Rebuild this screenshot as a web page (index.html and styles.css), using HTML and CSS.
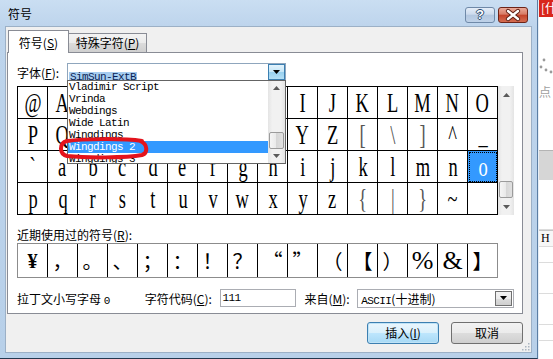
FILE: index.html
```html
<!DOCTYPE html>
<html>
<head lang="zh-CN">
    <meta charset="UTF-8">
    <title>符号</title>
    <link rel="stylesheet" href="styles.css">
</head>
<body>

<div class="dialog">
    <header class="titlebar">
        <span class="title">符号</span>
        <div class="caption-buttons">
            <div class="cap help">?</div>
            <div class="cap close">
                <svg width="28" height="14" viewBox="0 0 28 14">
                    <path d="M9 3l10 8M19 3L9 11" stroke="#5b1d12" stroke-width="4.2" stroke-linecap="round"/>
                    <path d="M9 3l10 8M19 3L9 11" stroke="#fff" stroke-width="2.4" stroke-linecap="round"/>
                </svg>
            </div>
        </div>
    </header>

    <main class="client">
        <nav class="tabs">
            <div class="tab active">符号(<u>S</u>)</div>
            <div class="tab">特殊字符(<u>P</u>)</div>
        </nav>

        <section class="panel">
            <div class="row font-row">
                <label class="lbl-font">字体(<u>F</u>):</label>
                <div class="combo">
                    <div class="combo-field">
                        <div class="combo-text"><span class="sel">SimSun-ExtB</span></div>
                        <div class="drop-btn hot">
                            <svg width="7" height="4"><path d="M0 0h7L3.5 4z" fill="#000"/></svg>
                        </div>
                    </div>
                    <!-- open font list -->
                    <div class="droplist">
                        <div class="items">
                            <div class="item">Vladimir Script</div>
                            <div class="item">Vrinda</div>
                            <div class="item">Webdings</div>
                            <div class="item">Wide Latin</div>
                            <div class="item">Wingdings</div>
                            <div class="item picked">Wingdings 2</div>
                            <div class="item">Wingdings 3</div>
                        </div>
                        <div class="vscroll small">
                            <div class="arrow"><svg width="7" height="4"><path d="M0 4h7L3.5 0z" fill="#5a5a5a"/></svg></div>
                            <div class="track"><div class="thumb"></div></div>
                            <div class="arrow"><svg width="7" height="4"><path d="M0 0h7L3.5 4z" fill="#5a5a5a"/></svg></div>
                        </div>
                    </div>
                    <svg class="mark" width="92" height="24" viewBox="0 0 92 24">
                        <path d="M84 5C64 2 24 3 9 5C1 7 1 18 9 20C28 22 68 22 84 19C90 17 90 8 82 5" fill="none" stroke="#e3131c" stroke-width="4" stroke-linecap="round"/>
                    </svg>
                </div>
            </div>

            <div class="charbox">
                <div class="charmap">
                    <div><span>@</span></div><div><span>A</span></div><div><span>B</span></div><div><span>C</span></div><div><span>D</span></div><div><span>E</span></div><div><span>F</span></div><div><span>G</span></div><div><span>H</span></div><div><span>I</span></div><div><span>J</span></div><div><span>K</span></div><div><span>L</span></div><div><span>M</span></div><div><span>N</span></div><div><span>O</span></div>
                    <div><span>P</span></div><div><span>Q</span></div><div><span>R</span></div><div><span>S</span></div><div><span>T</span></div><div><span>U</span></div><div><span>V</span></div><div><span>W</span></div><div><span>X</span></div><div><span>Y</span></div><div><span>Z</span></div><div class="light"><span>[</span></div><div class="light"><span>\</span></div><div class="light"><span>]</span></div><div><span>^</span></div><div><span>_</span></div>
                    <div><span>`</span></div><div><span>a</span></div><div><span>b</span></div><div><span>c</span></div><div><span>d</span></div><div><span>e</span></div><div><span>f</span></div><div><span>g</span></div><div><span>h</span></div><div><span>i</span></div><div><span>j</span></div><div><span>k</span></div><div><span>l</span></div><div><span>m</span></div><div><span>n</span></div><div class="current"><span>o</span></div>
                    <div><span>p</span></div><div><span>q</span></div><div><span>r</span></div><div><span>s</span></div><div><span>t</span></div><div><span>u</span></div><div><span>v</span></div><div><span>w</span></div><div><span>x</span></div><div><span>y</span></div><div><span>z</span></div><div class="light"><span>{</span></div><div class="light"><span>|</span></div><div class="light"><span>}</span></div><div><span>~</span></div><div></div>
                </div>
                <div class="vscroll">
                    <div class="arrow"><svg width="7" height="4"><path d="M0 4h7L3.5 0z" fill="#5a5a5a"/></svg></div>
                    <div class="track"><div class="thumb"></div></div>
                    <div class="arrow"><svg width="7" height="4"><path d="M0 0h7L3.5 4z" fill="#5a5a5a"/></svg></div>
                </div>
            </div>

            <div class="recent-label">近期使用过的符号(<u>R</u>):</div>
            <div class="recent">
                <span class="latin bold">¥</span><span>，</span><span>。</span><span>、</span><span>；</span><span>：</span><span>！</span><span>？</span>
                <span>“</span><span>”</span><span>（</span><span>【</span><span>）</span><span class="latin">%</span><span class="latin">&amp;</span><span>】</span>
            </div>

            <div class="row bottom-row">
                <span class="lbl-kind">拉丁文小写字母 <span class="mono">0</span></span>
                <label class="lbl-code">字符代码(<u>C</u>):</label>
                <div class="code-input">111</div>
                <label class="lbl-from">来自(<u>M</u>):</label>
                <div class="select">
                    <div class="select-text"><span class="mono">ASCII</span>(十进制)</div>
                    <div class="select-btn">
                        <svg width="7" height="4"><path d="M0 0h7L3.5 4z" fill="#000"/></svg>
                    </div>
                </div>
            </div>
        </section>

        <footer class="buttons">
            <button class="btn default">插入(<u>I</u>)</button>
            <button class="btn">取消</button>
        </footer>

        <svg class="grip" width="9" height="9" viewBox="0 0 9 9">
            <rect x="7" y="1" width="1.5" height="1.5" fill="#a9b4c0"/>
            <rect x="4" y="4" width="1.5" height="1.5" fill="#a9b4c0"/>
            <rect x="7" y="4" width="1.5" height="1.5" fill="#a9b4c0"/>
            <rect x="1" y="7" width="1.5" height="1.5" fill="#a9b4c0"/>
            <rect x="4" y="7" width="1.5" height="1.5" fill="#a9b4c0"/>
            <rect x="7" y="7" width="1.5" height="1.5" fill="#a9b4c0"/>
        </svg>
    </main>
</div>

<!-- window behind the dialog -->
<aside class="bgapp">
    <div class="bg-ribbon">[什</div>
    <div class="bg-canvas">
        <svg class="bg-dots" width="14" height="20">
            <circle cx="5" cy="3" r="1.4" fill="#9a9a9a"/>
            <circle cx="2" cy="10" r="1.4" fill="#9a9a9a"/>
            <circle cx="7" cy="13" r="1.4" fill="#9a9a9a"/>
            <circle cx="12" cy="15" r="1.4" fill="#9a9a9a"/>
        </svg>
        <div class="bg-note">点</div>
    </div>
    <div class="bg-band"></div>
    <div class="bg-rows">
        <div class="bg-row blank"></div>
        <div class="bg-row head">H</div>
        <div class="bg-row"></div>
        <div class="bg-row tall"></div>
        <div class="bg-row tall"></div>
        <div class="bg-row"></div>
    </div>
</aside>

</body>
</html>
```

FILE: styles.css
```css
* {
    box-sizing: border-box;
}
body {
    margin: 0;
    width: 553px;
    height: 359px;
    overflow: hidden;
    display: flex;
    font-family: "Noto Sans CJK SC", sans-serif;
    font-size: 12px;
    color: #000;
    background: #fff;
}
u {
    text-underline-offset: 1px;
}
.mono {
    font-family: "Liberation Mono", "Courier New", "Nimbus Mono PS", "FreeMono", "DejaVu Sans Mono", monospace;
    font-size: 11px;
    letter-spacing: -0.6px;
}

/* window frame */
.dialog {
    width: 538px;
    height: 359px;
    flex-shrink: 0;
    display: flex;
    flex-direction: column;
    padding: 0 6px 6px;
    background: linear-gradient(#cadef2, #bdd4ec 27px, #b8d0e9);
    border-right: 1px solid #5b7ea4;
    border-bottom: 1px solid #23384f;
}
.titlebar {
    height: 27px;
    display: flex;
    align-items: flex-start;
    padding: 6px 3px 0 2px;
}
.title {
    line-height: 16px;
}
.caption-buttons {
    margin-left: auto;
    margin-top: 1px;
    display: flex;
    gap: 3px;
}
.cap {
    width: 30px;
    height: 16px;
    border-radius: 3px;
    display: flex;
    align-items: center;
    justify-content: center;
}
.help {
    border: 1px solid #6f89a8;
    background: linear-gradient(#e4edf8, #cddbed 45%, #b3c7e0 50%, #bfd2e8);
    color: #fff;
    font: bold 13px/14px "Liberation Sans", sans-serif;
    text-shadow: 1px 0 0 #2d4b70, -1px 0 0 #2d4b70, 0 1px 0 #2d4b70, 0 -1px 0 #2d4b70;
}
.close {
    border: 1px solid #6d2418;
    background: linear-gradient(#eba998, #d77c66 45%, #c4432a 50%, #d46d52);
}

.client {
    flex: 1;
    position: relative;
    display: flex;
    flex-direction: column;
    padding: 3px 8px 8px 1px;
    background: #f0f0f0;
    box-shadow: 0 0 0 1px #9cb0c6;
}

/* tabs */
.tabs {
    position: relative;
    z-index: 1;
    display: flex;
    align-items: flex-end;
    height: 23px;
    margin-bottom: -1px;
    padding-left: 1px;
}
.tab {
    width: 79px;
    height: 19px;
    margin-bottom: 1px;
    padding-top: 1px;
    text-align: center;
    line-height: 16px;
    border: 1px solid #898c95;
    border-bottom: none;
    background: linear-gradient(#f3f3f3, #ebebeb 50%, #dcdcdc 50%, #cfcfcf);
}
.tab.active {
    width: 61px;
    height: 23px;
    margin-bottom: 0;
    padding-top: 4px;
    background: #fff;
}
.tab + .tab {
    margin-left: -1px;
}

.panel {
    border: 1px solid #898c95;
    background: #fff;
    padding: 10px 8px 6px 9px;
}
.row {
    display: flex;
    align-items: center;
    height: 18px;
}

/* font combobox */
.lbl-font {
    width: 50px;
}
.combo {
    position: relative;
    width: 219px;
    height: 18px;
}
.combo-field {
    display: flex;
    height: 18px;
    border: 1px solid #8fa6bd;
    background: #fff;
}
.combo-text {
    flex: 1;
    padding: 2px 0 0 1px;
}
.combo-text .sel {
    display: inline-block;
    padding: 0 1px;
    background: #a6ccef;
    color: #0b1f55;
    font: 11px/11px "Liberation Mono", "Courier New", "Nimbus Mono PS", "FreeMono", "DejaVu Sans Mono", monospace;
    letter-spacing: -0.6px;
}
.drop-btn {
    width: 17px;
    display: flex;
    align-items: center;
    justify-content: center;
    border: 1px solid #3c7fb1;
    background: linear-gradient(#e3f3fc, #c4e5f6 50%, #97d0ef 50%, #b4dff5);
}
.droplist {
    position: absolute;
    z-index: 2;
    top: 17px;
    left: 0;
    width: 219px;
    height: 84px;
    display: flex;
    border: 1px solid #646464;
    background: #fff;
}
.items {
    flex: 1;
    overflow: hidden;
    font: 11px/12px "Liberation Mono", "Courier New", "Nimbus Mono PS", "FreeMono", "DejaVu Sans Mono", monospace;
    letter-spacing: -0.6px;
}
.item {
    height: 12px;
    padding-left: 1px;
    overflow: hidden;
    white-space: nowrap;
}
.item.picked {
    background: #3399ff;
    color: #fff;
}
.mark {
    position: absolute;
    z-index: 3;
    left: -9px;
    top: 73px;
}

/* scrollbars */
.vscroll {
    width: 17px;
    display: flex;
    flex-direction: column;
    background: linear-gradient(to right, #e4e4e4, #f1f1f1 25%, #f1f1f1 75%, #e4e4e4);
}
.vscroll .arrow {
    height: 17px;
    display: flex;
    align-items: center;
    justify-content: center;
}
.vscroll.small .arrow {
    height: 14px;
}
.vscroll .track {
    flex: 1;
    display: flex;
    flex-direction: column;
    justify-content: flex-end;
}
.vscroll .thumb {
    height: 17px;
    margin: 0 1px;
    border: 1px solid #9b9b9b;
    border-radius: 2px;
    background: linear-gradient(to right, #f5f5f5, #e9e9e9 50%, #d6d6d6 50%, #e1e1e1);
}

/* character table */
.charbox {
    display: flex;
    margin-top: 5px;
}
.charmap {
    width: 481px;
    display: grid;
    grid-template-columns: repeat(16, 30px);
    grid-auto-rows: 32px;
    border-left: 1px solid #000;
    border-top: 1px solid #000;
}
.charmap div {
    display: flex;
    align-items: center;
    justify-content: center;
    border-right: 1px solid #000;
    border-bottom: 1px solid #000;
    font: 28px/28px "Liberation Serif", serif;
}
.charmap span {
    display: inline-block;
    transform: scaleX(0.66);
}
.charmap .light {
    color: #555;
}
.charmap .current {
    background: #3399ff;
    color: #fff;
    outline: 1px dotted #000;
    outline-offset: -2px;
}

.recent-label {
    margin-top: 13px;
    line-height: 14px;
}
.recent {
    width: 481px;
    height: 35px;
    margin-top: 1px;
    display: grid;
    grid-template-columns: repeat(16, 30px);
    border: 1px solid #8c8c8c;
    border-right: none;
}
.recent span {
    display: flex;
    align-items: center;
    justify-content: center;
    border-right: 1px solid #000;
    font-size: 20px;
    line-height: 1;
}
.recent span:last-child {
    border-right-color: #8c8c8c;
}
.recent .latin {
    font-family: "Liberation Serif", serif;
    font-size: 26px;
}
.recent .bold {
    font-weight: bold;
    font-size: 20px;
}

/* bottom fields */
.bottom-row {
    margin-top: 11px;
}
.lbl-kind {
    width: 128px;
}
.lbl-code {
    width: 75px;
}
.code-input {
    width: 77px;
    height: 18px;
    padding-left: 2px;
    border: 1px solid #abadb3;
    background: #fff;
    font: 11px/16px "Liberation Mono", "Courier New", "Nimbus Mono PS", "FreeMono", "DejaVu Sans Mono", monospace;
    letter-spacing: -0.6px;
}
.lbl-from {
    width: 53px;
    margin-left: 8px;
}
.select {
    width: 157px;
    height: 19px;
    display: flex;
    border: 1px solid #abadb3;
    background: #fff;
}
.select-text {
    flex: 1;
    padding-left: 3px;
    line-height: 17px;
}
.select-btn {
    width: 17px;
    margin: 1px;
    display: flex;
    align-items: center;
    justify-content: center;
    border: 1px solid #707070;
    background: linear-gradient(#f2f2f2, #ebebeb 50%, #dddddd 50%, #cfcfcf);
}

/* dialog buttons */
.buttons {
    display: flex;
    justify-content: flex-end;
    gap: 12px;
    margin-top: 8px;
}
.btn {
    width: 72px;
    height: 22px;
    padding: 0;
    border: 1px solid #707070;
    border-radius: 3px;
    background: linear-gradient(#f2f2f2, #ebebeb 50%, #dddddd 50%, #cfcfcf);
    font: 12px/18px "Noto Sans CJK SC", sans-serif;
    color: #000;
}
.btn.default {
    border-color: #3c7fb1;
    box-shadow: inset 0 0 0 1px #bfe3f7;
    background: linear-gradient(#eaf6fd, #d9f0fc 50%, #bee6fd 50%, #a7d9f5);
}
.grip {
    position: absolute;
    right: 1px;
    bottom: 1px;
}

/* window behind */
.bgapp {
    flex: 1;
    display: flex;
    flex-direction: column;
    border-left: 1px solid #e6eef6;
    background: #fff;
    overflow: hidden;
}
.bg-ribbon {
    height: 17px;
    padding-left: 2px;
    background: #d8261c;
    color: #fff;
    line-height: 16px;
    white-space: nowrap;
}
.bg-canvas {
    height: 133px;
    padding-top: 40px;
}
.bg-dots {
    display: block;
}
.bg-note {
    margin-top: 8px;
    color: #a0a0a0;
    line-height: 14px;
    white-space: nowrap;
}
.bg-band {
    height: 30px;
    background: #d6d6d6;
    border-top: 1px solid #b4b4b4;
}
.bg-rows {
    flex: 1;
}
.bg-row {
    height: 16px;
    border-bottom: 1px solid #dcdcdc;
}
.bg-row.blank {
    height: 50px;
}
.bg-row.head {
    height: 17px;
    border-top: 1px solid #c6c6c6;
    background: #f7f7f7;
    font: 12px/15px "Liberation Serif", serif;
    padding-left: 2px;
}
.bg-row.tall {
    height: 31px;
}
```
